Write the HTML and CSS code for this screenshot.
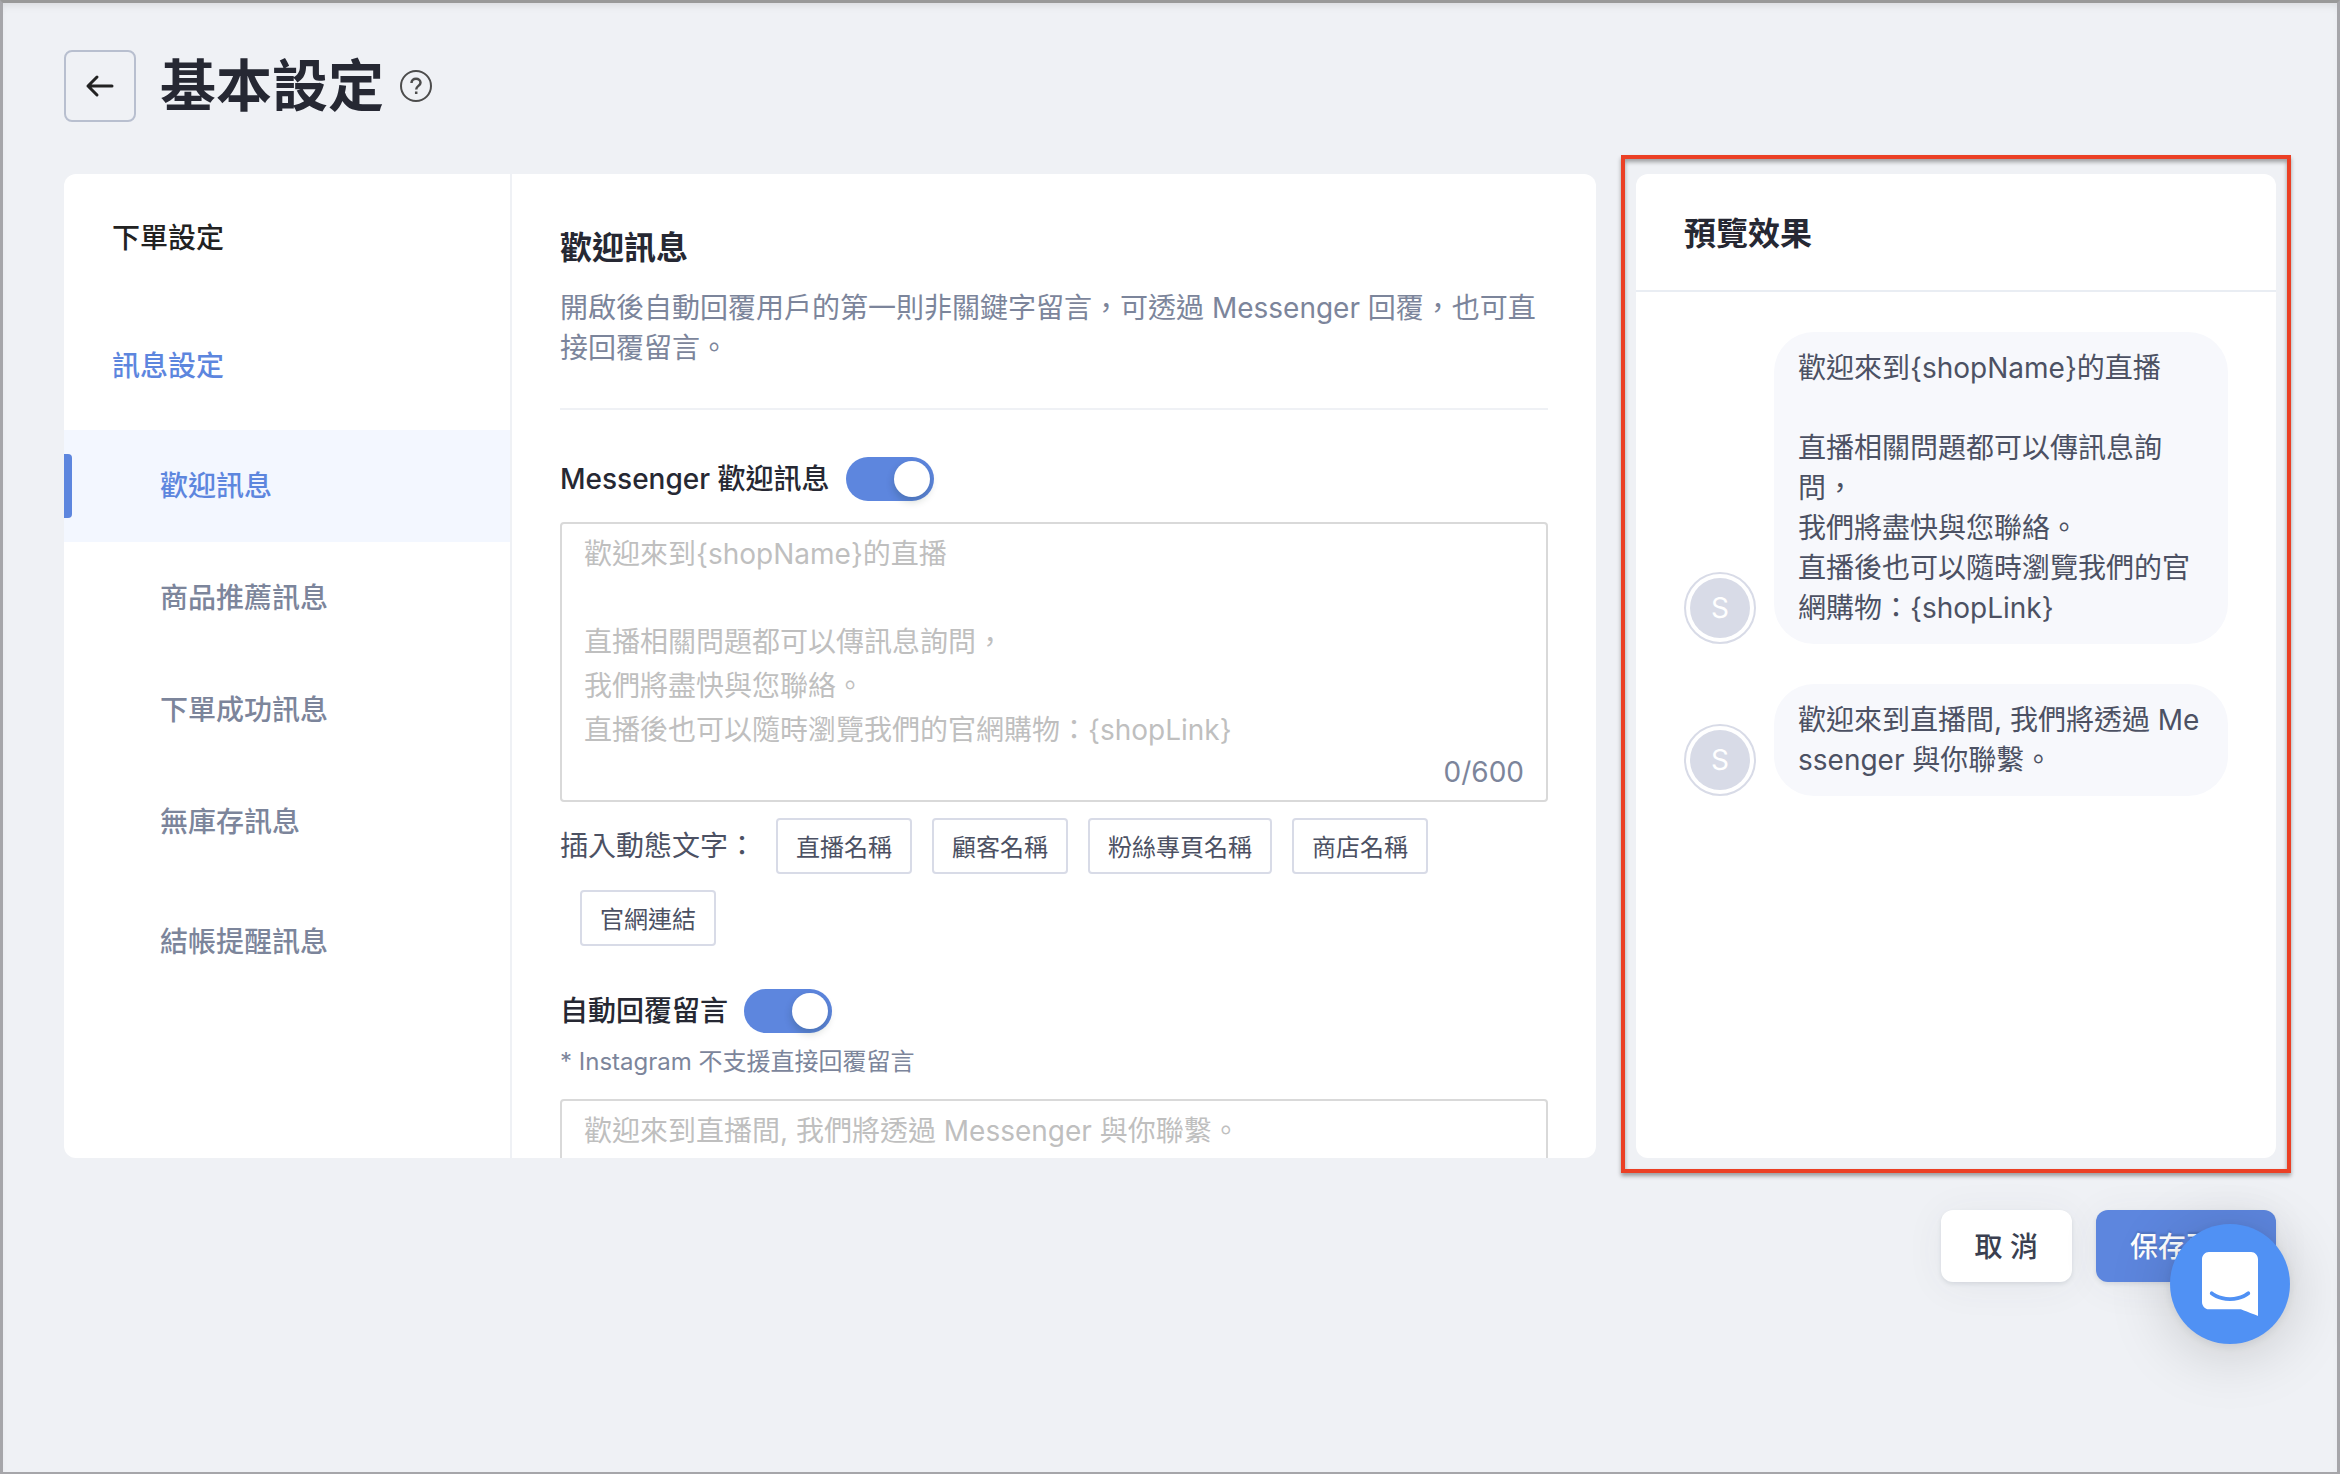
FILE: index.html
```
<!DOCTYPE html>
<html lang="zh-TW">
<head>
<meta charset="utf-8">
<meta name="viewport" content="width=device-width, initial-scale=1">
<title>基本設定</title>
<link rel="stylesheet" href="styles.css">
</head>
<body>
<div class="page">
	<header class="header">
		<button class="back" type="button" aria-label="返回">
			<svg width="32" height="32" viewBox="0 0 32 32" fill="none" stroke="#222" stroke-width="3" stroke-linecap="round" stroke-linejoin="round"><path d="M28 16H4M13 7l-9 9 9 9"/></svg>
		</button>
		<h1>基本設定</h1>
		<button class="help" type="button" aria-label="說明">
			<svg width="32" height="32" viewBox="0 0 32 32" fill="none" stroke="#4c4c4c" stroke-width="2"><circle cx="16" cy="16" r="15"/><path stroke-width="2.500" d="M11.500 13c0-2.600 1.900-4.200 4.500-4.200s4.500 1.600 4.500 4c0 3-4.300 3.200-4.300 6.600M16.200 21.500v2.500"/></svg>
		</button>
	</header>

	<div class="columns">
		<div class="panel">
			<nav class="menu">
				<a class="item" href="#order">下單設定</a>
				<a class="item on" href="#message">訊息設定</a>
				<a class="sub active" href="#welcome">歡迎訊息</a>
				<a class="sub" href="#recommend">商品推薦訊息</a>
				<a class="sub" href="#success">下單成功訊息</a>
				<a class="sub" href="#soldout">無庫存訊息</a>
				<a class="sub last" href="#checkout">結帳提醒訊息</a>
			</nav>
			<main class="content">
				<h2>歡迎訊息</h2>
				<p class="desc">開啟後自動回覆用戶的第一則非關鍵字留言，可透過 Messenger 回覆，也可直接回覆留言。</p>

				<div class="row">
					<label for="sw1">Messenger 歡迎訊息</label>
					<input class="switch" id="sw1" type="checkbox" checked>
				</div>
				<div class="field">
					<textarea aria-label="Messenger 歡迎訊息" placeholder="歡迎來到{shopName}的直播&#10;&#10;直播相關問題都可以傳訊息詢問，&#10;我們將盡快與您聯絡。&#10;直播後也可以隨時瀏覽我們的官網購物：{shopLink}"></textarea>
					<span class="count">0/600</span>
				</div>
				<div class="tags">
					<span>插入動態文字：</span>
					<button type="button">直播名稱</button>
					<button type="button">顧客名稱</button>
					<button type="button">粉絲專頁名稱</button>
					<button type="button">商店名稱</button>
					<button type="button">官網連結</button>
				</div>

				<div class="row second">
					<label for="sw2">自動回覆留言</label>
					<input class="switch" id="sw2" type="checkbox" checked>
				</div>
				<p class="hint">* Instagram 不支援直接回覆留言</p>
				<div class="field">
					<textarea aria-label="自動回覆留言" placeholder="歡迎來到直播間, 我們將透過 Messenger 與你聯繫。"></textarea>
				</div>
			</main>
		</div>

		<aside class="preview">
			<h2>預覽效果</h2>
			<div class="chat">
				<div class="msg">
					<span class="avatar">S</span>
					<p>歡迎來到{shopName}的直播<br><br>直播相關問題都可以傳訊息詢問，<br>我們將盡快與您聯絡。<br>直播後也可以隨時瀏覽我們的官網購物：{shopLink}</p>
				</div>
				<div class="msg">
					<span class="avatar">S</span>
					<p>歡迎來到直播間, 我們將透過 Messenger 與你聯繫。</p>
				</div>
			</div>
		</aside>
	</div>

	<footer class="footer">
		<button class="btn" type="button">取 消</button>
		<button class="btn primary" type="button">保存更改</button>
	</footer>
</div>

<button class="messenger" type="button" aria-label="聯絡客服">
	<svg width="56" height="64" viewBox="0 0 28 32" fill="#fff"><path d="M28 32s-4.714-1.855-8.527-3.340H3.437C1.540 28.660 0 27.026 0 25.013V3.644C0 1.633 1.540 0 3.437 0h21.125c1.898 0 3.437 1.632 3.437 3.645v18.404H28V32zm-4.139-11.982a.88.88 0 00-1.292-.105c-.03.026-3.015 2.681-8.570 2.681-5.486 0-8.517-2.636-8.571-2.684a.88.88 0 00-1.290.107 1.010 1.010 0 00-.219.708.992.992 0 00.318.664c.142.128 3.537 3.150 9.762 3.150 6.226 0 9.621-3.022 9.763-3.150a.992.992 0 00.317-.664 1.010 1.010 0 00-.218-.707z"/></svg>
</button>
</body>
</html>
```
FILE: styles.css
```
*{margin:0;padding:0;box-sizing:border-box;}
body{font-family:Inter,"Noto Sans CJK TC",sans-serif;font-size:28px;line-height:40px;color:#4c5163;background:#eff1f5;}
button,textarea{font-family:inherit;font-size:28px;color:inherit;}
button{border:0;background:none;cursor:pointer;}
a{text-decoration:none;color:inherit;}
svg{display:block;}

.page{min-height:100vh;padding:47px 61px 40px;border:3px solid #a6a6aa;border-top-color:#999;border-bottom-width:2px;box-shadow:inset 0 6px 8px -4px rgba(0,0,0,.1);}

/* 標題列 */
.header{display:flex;align-items:center;height:72px;}
.back{display:flex;align-items:center;justify-content:center;width:72px;height:72px;border:2px solid #b8bfcf;border-radius:8px;}
h1{margin:0 16px 0 24px;font-size:56px;line-height:72px;font-weight:600;color:#262833;}

.columns{display:flex;gap:40px;height:calc(100vh - 490px);margin-top:52px;}
.panel{display:flex;flex:1;min-width:0;background:#fff;border-radius:12px;overflow:hidden;}

/* 左側選單 */
.menu{flex:0 0 448px;border-right:2px solid #eff1f5;font-weight:500;color:#7c859b;}
.menu a{display:flex;align-items:center;}
.menu .item{height:128px;padding-left:48px;color:#222;}
.menu .on{color:#5d86de;}
.menu .sub{position:relative;height:112px;padding-left:96px;}
.menu .last{height:128px;}
.menu .active{color:#5d86de;background:#f3f7ff;}
.menu .active::before{content:"";position:absolute;left:0;top:24px;bottom:24px;width:8px;background:#5d86de;border-radius:0 4px 4px 0;}

/* 設定內容 */
.content{flex:1;min-width:0;padding:54px 48px 0;overflow:hidden;}
h2{font-size:32px;line-height:40px;font-weight:600;color:#262833;}
.desc{margin-top:20px;padding-bottom:40px;border-bottom:2px solid #eff1f5;color:#7c859b;}
.row{display:flex;align-items:center;gap:16px;height:44px;margin-top:47px;font-weight:500;color:#262833;}
.second{margin-top:43px;}
.switch{appearance:none;width:88px;height:44px;padding:4px;border-radius:22px;background:#bfc4d1;cursor:pointer;}
.switch::before{content:"";display:block;width:36px;height:36px;border-radius:50%;background:#fff;box-shadow:0 4px 8px rgba(0,35,11,.2);}
.switch:checked{background:#5d86de;}
.switch:checked::before{margin-left:44px;}
.field{position:relative;margin-top:21px;}
.field textarea{display:block;width:100%;height:280px;padding:8px 22px;border:2px solid #d9d9d9;border-radius:4px;background:#fff;line-height:44px;resize:none;}
.field textarea::placeholder{color:#bfbfbf;}
.count{position:absolute;right:24px;bottom:10px;color:#7c859b;}
.tags{display:flex;flex-wrap:wrap;align-items:center;row-gap:16px;margin-top:16px;}
.tags button{height:56px;margin-left:20px;padding:0 18px 2px;border:2px solid #d8dbe7;border-radius:4px;font-size:24px;}
.hint{margin-top:9px;font-size:24px;color:#7c859b;}
.hint + .field{margin-top:17px;}

/* 預覽 */
.preview{position:relative;flex:0 0 640px;background:#fff;border-radius:12px;}
.preview::after{content:"";position:absolute;inset:-19px -15px -15px;border:4px solid #eb4025;box-shadow:0 3px 4px rgba(0,0,0,.35),inset 0 3px 4px rgba(0,0,0,.35);pointer-events:none;}
.preview h2{padding:40px 48px 36px;border-bottom:2px solid #e9edf3;}
.chat{display:flex;flex-direction:column;gap:40px;padding:40px 48px;}
.msg{display:flex;align-items:flex-end;gap:18px;}
.msg p{flex:1;padding:16px 24px;border-radius:40px;background:#f7f8fc;word-break:break-all;}
.avatar{flex:0 0 72px;height:72px;padding:4px;border:2px solid #d8dbe7;border-radius:50%;background:#d8dbe7 content-box;color:#fff;line-height:60px;text-align:center;}

/* 底部按鈕 */
.footer{display:flex;justify-content:flex-end;gap:24px;margin-top:52px;}
.btn{height:72px;padding:0 34px 2px;border-radius:12px;background:#fff;font-weight:500;color:#3a3f50;box-shadow:0 2px 4px rgba(60,70,90,.12),0 4px 40px rgba(60,70,90,.06);}
.primary{background:#5d86de;color:#fff;text-shadow:0 -2px 2px rgba(0,0,0,.15);}

.messenger{position:fixed;right:50px;bottom:130px;display:flex;align-items:center;justify-content:center;width:120px;height:120px;border-radius:50%;background:#5091f4;box-shadow:0 2px 12px rgba(0,0,0,.08),0 8px 64px rgba(0,0,0,.18);}
```
